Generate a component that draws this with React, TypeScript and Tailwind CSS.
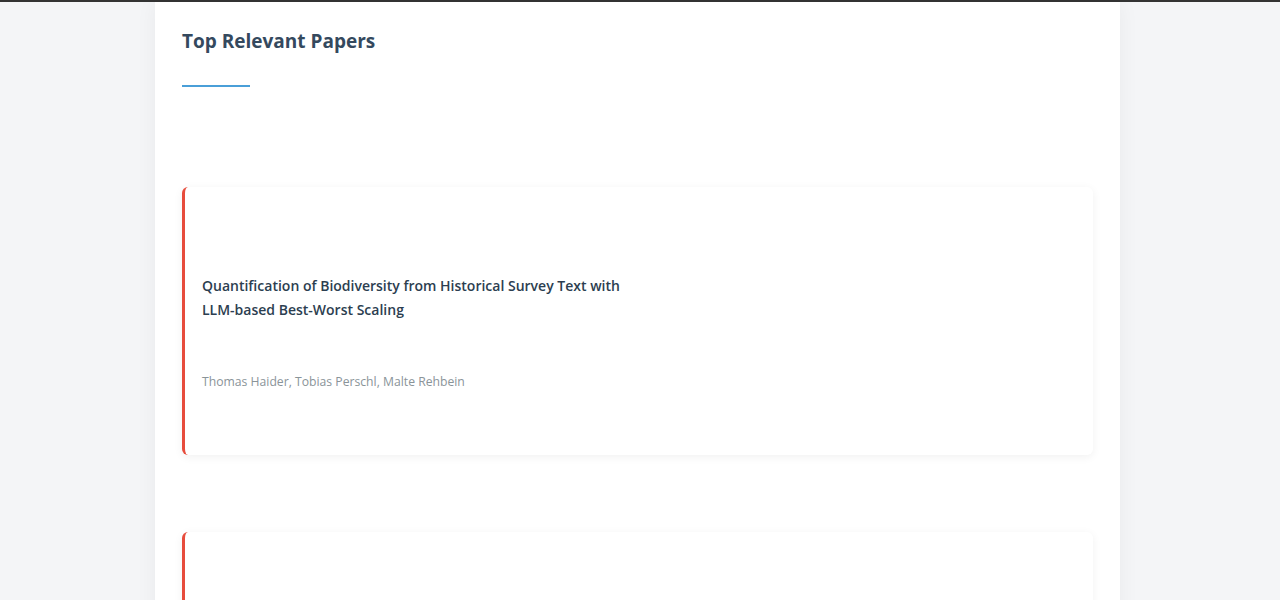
const papers = [
  {
    title: "Quantification of Biodiversity from Historical Survey Text with LLM-based Best-Worst Scaling",
    authors: "Thomas Haider, Tobias Perschl, Malte Rehbein",
  },
  {
    title: "",
    authors: "",
  },
];

const PaperCard = ({ title, authors }: { title: string; authors: string }) => {
  return (
    <div className="rounded-md border-l-[3px] border-[#e74c3c] bg-white shadow-[0_2px_10px_rgba(0,0,0,0.06)] px-[17px] pt-[87px] pb-[63px]">
      <h3 className="max-w-[440px] text-[14px] leading-6 font-semibold text-[#2c3e50]">{title}</h3>
      <p className="mt-[50px] text-[12.2px] leading-5 text-[#8a9499]">{authors}</p>
    </div>
  );
};

export default function App() {
  return (
    <div
      className="min-h-[600px] h-[600px] overflow-hidden border-t-2 border-[#333333] bg-[#f4f5f7]"
      style={{ fontFamily: '"Open Sans", "Noto Sans", sans-serif' }}
    >
      <div className="ml-[155px] w-[965px] min-h-full bg-white px-[27px] pt-[25px] shadow-[0_0_20px_rgba(0,0,0,0.05)]">
        <h2 className="text-[19px] leading-7 font-bold text-[#34495e]">Top Relevant Papers</h2>
        <div className="mt-[30px] h-[2px] w-[68px] bg-[#4a9fd8]" />
        <div className="mt-[100px] flex flex-col gap-[77px]">
          {papers.map((p, i) => (
            <PaperCard key={i} title={p.title} authors={p.authors} />
          ))}
        </div>
      </div>
    </div>
  );
}
